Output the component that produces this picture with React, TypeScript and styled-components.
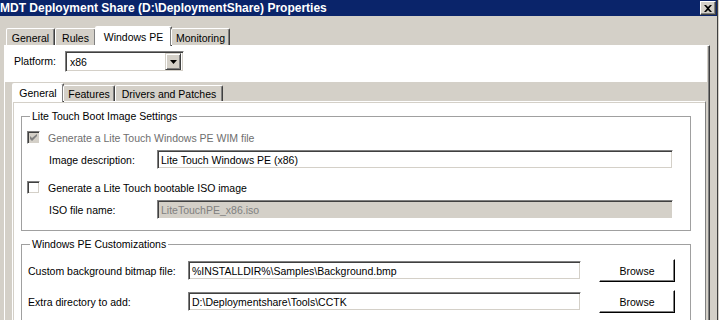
import React from "react";
import styled, { createGlobalStyle } from "styled-components";

const GlobalStyle = createGlobalStyle`
  html, body {
    margin: 0;
    padding: 0;
    background: #d4d0c8;
  }
  body {
    font-family: "Liberation Sans", Arial, sans-serif;
    font-size: 10.5px;
    color: #000;
  }
`;

const Window = styled.div`
  width: 717px;
  height: 320px;
  background: #d4d0c8;
  border-right: 1px solid #404040;
  overflow: hidden;
`;

const TitleBar = styled.div`
  height: 16px;
  background: #0a246a;
  display: flex;
  align-items: center;
  justify-content: space-between;
  padding: 0 1px 0 0;
`;

const Title = styled.div`
  color: #fff;
  font-weight: bold;
  font-size: 12px;
  white-space: nowrap;
`;

const CloseButton = styled.div`
  width: 16px;
  height: 14px;
  box-sizing: border-box;
  background: #d4d0c8;
  border: 1px solid;
  border-color: #fff #404040 #404040 #fff;
  box-shadow: inset -1px -1px #808080;
  display: flex;
  align-items: center;
  justify-content: center;
`;

const Body = styled.div`
  padding: 8px 0 0 4px;
`;

const TabStrip = styled.div<{ $indent: number; $height: number }>`
  display: flex;
  align-items: flex-end;
  height: ${(p) => p.$height}px;
  padding-left: ${(p) => p.$indent}px;
  position: relative;
  z-index: 1;
`;

const Tab = styled.div<{ $active?: boolean; $width: number; $tall: number }>`
  box-sizing: border-box;
  width: ${(p) => p.$width + (p.$active ? 2 : 0)}px;
  height: ${(p) => (p.$active ? p.$tall : p.$tall - 3)}px;
  margin: ${(p) => (p.$active ? "0 -1px -1px -1px" : "0")};
  background: ${(p) => (p.$active ? "#fff" : "#d4d0c8")};
  border: 1px solid;
  border-bottom: none;
  border-color: #fff #404040 transparent #fff;
  border-radius: 2px 2px 0 0;
  box-shadow: inset -1px 0 #808080;
  display: flex;
  align-items: center;
  justify-content: center;
  padding-top: ${(p) => (p.$active ? 0 : 1)}px;
  white-space: nowrap;
  position: relative;
`;

const TabPage = styled.div`
  width: 706px;
  box-sizing: border-box;
  border: 1px solid;
  border-bottom: none;
  border-color: #fff #404040 transparent #fff;
  box-shadow: inset -1px 0 #808080;
  background: #d4d0c8;
  height: 280px;
`;

const PlatformBar = styled.div`
  height: 36px;
  background: #fff;
  margin-right: 2px;
  display: flex;
  align-items: flex-start;
  padding: 5px 0 0 9px;
  box-sizing: border-box;
`;

const PlatformLabel = styled.span`
  width: 51px;
  line-height: 21px;
`;

const Combo = styled.div`
  width: 119px;
  height: 21px;
  box-sizing: border-box;
  border: 1px solid;
  border-color: #808080 #fff #fff #808080;
  box-shadow: inset 1px 1px #404040, inset -1px -1px #d4d0c8;
  background: #fff;
  display: flex;
  align-items: center;
  padding: 2px;
`;

const ComboValue = styled.span`
  flex: 1;
  padding-left: 2px;
`;

const ComboButton = styled.div`
  width: 16px;
  height: 17px;
  box-sizing: border-box;
  background: #d4d0c8;
  border: 1px solid;
  border-color: #d4d0c8 #404040 #404040 #d4d0c8;
  box-shadow: inset 1px 1px #fff, inset -1px -1px #808080;
  display: flex;
  align-items: center;
  justify-content: center;
`;

const InnerArea = styled.div`
  padding: 1px 3px 0 7px;
`;

const InnerPage = styled.div`
  box-sizing: border-box;
  width: 694px;
  height: 230px;
  background: #fff;
  border: 1px solid;
  border-bottom: none;
  border-color: #fff #808080 transparent #fff;
  box-shadow: inset 1px 1px #d4d0c8;
  padding: 8px 0 0 8px;
`;

const Group = styled.fieldset<{ $gap: number; $bottom: number }>`
  width: 670px;
  box-sizing: border-box;
  margin: ${(p) => p.$gap}px 0 0 0;
  border: 1px solid #a0a0a0;
  padding: 0 0 ${(p) => p.$bottom}px 5px;
  min-inline-size: 0;
`;

const Legend = styled.legend`
  padding: 0 2px;
  margin-left: 3px;
  line-height: 13px;
`;

const CheckRow = styled.div<{ $top: number }>`
  display: flex;
  align-items: center;
  height: 13px;
  margin-top: ${(p) => p.$top}px;
  gap: 8px;
`;

const CheckBox = styled.div<{ $disabled?: boolean }>`
  width: 13px;
  height: 13px;
  box-sizing: border-box;
  border: 1px solid;
  border-color: #808080 #fff #fff #808080;
  box-shadow: inset 1px 1px #404040, inset -1px -1px #d4d0c8;
  background: ${(p) => (p.$disabled ? "#d4d0c8" : "#fff")};
  display: flex;
  align-items: center;
  justify-content: center;
`;

const CheckLabel = styled.span<{ $disabled?: boolean }>`
  color: ${(p) => (p.$disabled ? "#6e6e6e" : "#000")};
`;

const FieldRow = styled.div<{ $top: number; $indent: number }>`
  display: flex;
  align-items: center;
  margin-top: ${(p) => p.$top}px;
  padding-left: ${(p) => p.$indent}px;
  height: 23px;
`;

const FieldLabel = styled.span<{ $width: number }>`
  width: ${(p) => p.$width}px;
  flex-shrink: 0;
`;

const TextBox = styled.div<{ $width: number; $disabled?: boolean }>`
  width: ${(p) => p.$width}px;
  height: 19px;
  box-sizing: border-box;
  border: 1px solid;
  border-color: #808080 #fff #fff #808080;
  box-shadow: inset 1px 1px #404040, inset -1px -1px #d4d0c8;
  background: ${(p) => (p.$disabled ? "#d4d0c8" : "#fff")};
  color: ${(p) => (p.$disabled ? "#808080" : "#000")};
  display: flex;
  align-items: center;
  padding-left: 3px;
  white-space: nowrap;
  overflow: hidden;
`;

const Button = styled.div`
  width: 76px;
  height: 23px;
  margin-left: 18px;
  box-sizing: border-box;
  background: #fff;
  border: 1px solid;
  border-color: #fff #000 #000 #fff;
  box-shadow: inset -1px -1px #808080;
  display: flex;
  align-items: center;
  justify-content: center;
`;

const Check = ({ color }: { color: string }) => (
  <svg width="7" height="7" viewBox="0 0 7 7">
    <path d="M0 2v3l2 2 5-5V-0L2 4z" fill={color} />
  </svg>
);

export default function App() {
  return (
    <>
      <GlobalStyle />
      <Window>
        <TitleBar>
          <Title>MDT Deployment Share (D:\DeploymentShare) Properties</Title>
          <CloseButton>
            <svg width="8" height="7" viewBox="0 0 8 7">
              <path d="M0 0h2l2 2 2-2h2L5 3.5 8 7H6L4 5 2 7H0l3-3.5z" fill="#000" />
            </svg>
          </CloseButton>
        </TitleBar>
        <Body>
          <TabStrip $indent={2} $height={21}>
            <Tab $tall={20} $width={49}>General</Tab>
            <Tab $tall={20} $width={41}>Rules</Tab>
            <Tab $tall={20} $active $width={75}>Windows PE</Tab>
            <Tab $tall={20} $width={59}>Monitoring</Tab>
          </TabStrip>
          <TabPage>
            <PlatformBar>
              <PlatformLabel>Platform:</PlatformLabel>
              <Combo>
                <ComboValue>x86</ComboValue>
                <ComboButton>
                  <svg width="7" height="4" viewBox="0 0 7 4">
                    <path d="M0 0h7L3.5 4z" fill="#000" />
                  </svg>
                </ComboButton>
              </Combo>
            </PlatformBar>
            <InnerArea>
              <TabStrip $indent={1} $height={18}>
                <Tab $tall={19} $active $width={50}>General</Tab>
                <Tab $tall={19} $width={52}>Features</Tab>
                <Tab $tall={19} $width={108}>Drivers and Patches</Tab>
              </TabStrip>
              <InnerPage>
                <Group $gap={0} $bottom={9}>
                  <Legend>Lite Touch Boot Image Settings</Legend>
                  <CheckRow $top={8}>
                    <CheckBox $disabled>
                      <Check color="#808080" />
                    </CheckBox>
                    <CheckLabel $disabled>Generate a Lite Touch Windows PE WIM file</CheckLabel>
                  </CheckRow>
                  <FieldRow $top={4} $indent={22}>
                    <FieldLabel $width={108}>Image description:</FieldLabel>
                    <TextBox $width={516}>Lite Touch Windows PE (x86)</TextBox>
                  </FieldRow>
                  <CheckRow $top={10}>
                    <CheckBox />
                    <CheckLabel>Generate a Lite Touch bootable ISO image</CheckLabel>
                  </CheckRow>
                  <FieldRow $top={4} $indent={22}>
                    <FieldLabel $width={108}>ISO file name:</FieldLabel>
                    <TextBox $width={516} $disabled>LiteTouchPE_x86.iso</TextBox>
                  </FieldRow>
                </Group>
                <Group $gap={7} $bottom={10}>
                  <Legend>Windows PE Customizations</Legend>
                  <FieldRow $top={8} $indent={1}>
                    <FieldLabel $width={160}>Custom background bitmap file:</FieldLabel>
                    <TextBox $width={393}>%INSTALLDIR%\Samples\Background.bmp</TextBox>
                    <Button>Browse</Button>
                  </FieldRow>
                  <FieldRow $top={8} $indent={1}>
                    <FieldLabel $width={160}>Extra directory to add:</FieldLabel>
                    <TextBox $width={393}>D:\Deploymentshare\Tools\CCTK</TextBox>
                    <Button>Browse</Button>
                  </FieldRow>
                </Group>
              </InnerPage>
            </InnerArea>
          </TabPage>
        </Body>
      </Window>
    </>
  );
}
